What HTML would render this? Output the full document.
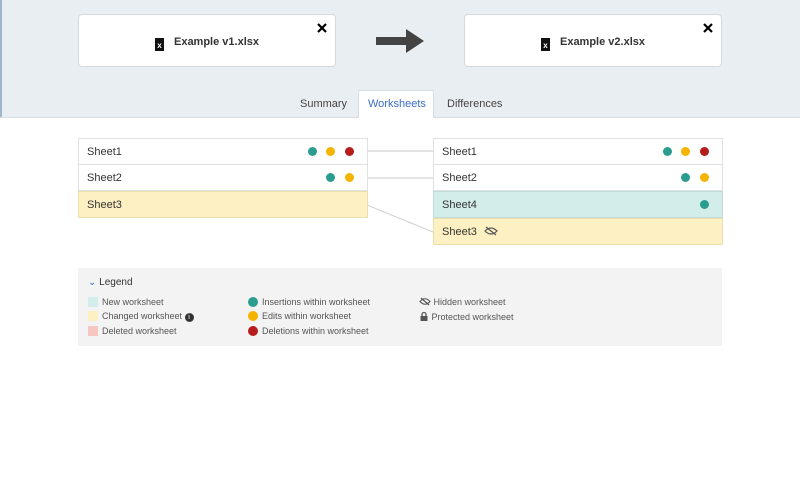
<!DOCTYPE html><html><head><style>
body{margin:0;width:800px;height:500px;background:#fff;font-family:"Liberation Sans",sans-serif;position:relative;overflow:hidden;color:#333}
.hdr{position:absolute;left:0;top:0;width:800px;height:117px;background:#e9eef3;border-bottom:1px solid #d6dde4}
.card{position:absolute;top:14px;width:258px;height:53px;background:#fff;border:1px solid #d4d9de;border-radius:4px;box-sizing:border-box;font-weight:bold;font-size:11px;color:#333}
.card .t{position:absolute;top:21px;left:0;width:100%;text-align:center}
.card svg.x{position:absolute;right:8px;top:8px}
.fi{display:inline-block;width:9px;height:13px;background:#111;vertical-align:-3px;margin-right:10px;position:relative;color:#fff;font-size:8px;line-height:16px;text-align:center}
.tab{position:absolute;top:98px;font-size:11px;color:#444}
.row{position:absolute;height:27px;box-sizing:border-box;border:1px solid #dfe2e5;font-size:11px;line-height:26px;padding-left:8px;color:#333}
.d{position:absolute;top:8px;width:9px;height:9px;border-radius:50%}
.g{background:#2a9d8f}.y{background:#f4b400}.r{background:#b71c1c}
.lg{position:absolute;left:78px;top:268px;width:644px;height:78px;background:#f3f3f3;font-size:9px;color:#555}
.lg div{position:absolute}
.sw{width:10px;height:10px}
</style></head><body>
<div class="hdr"></div>
<div style="position:absolute;left:0;top:0;width:2px;height:117px;background:#9fb4c8"></div>
<div class="card" style="left:78px"><div class="t"><span class="fi">x</span>Example v1.xlsx</div><svg class="x" width="10" height="10"><path d="M1 1L9 9M9 1L1 9" stroke="#000" stroke-width="2.2"/></svg></div>
<div class="card" style="left:464px"><div class="t"><span class="fi">x</span>Example v2.xlsx</div><svg class="x" width="10" height="10"><path d="M1 1L9 9M9 1L1 9" stroke="#000" stroke-width="2.2"/></svg></div>
<svg style="position:absolute;left:376px;top:28px" width="50" height="26"><rect x="0" y="9" width="34" height="8" fill="#444"/><path d="M30 1 L48 13 L30 25Z" fill="#444"/></svg>
<div class="tab" style="left:300px">Summary</div>
<div style="position:absolute;left:358px;top:90px;width:76px;height:28px;background:#fff;border:1px solid #d6dde4;border-bottom:none;box-sizing:border-box"></div>
<div class="tab" style="left:368px;color:#3a6ec8">Worksheets</div>
<div class="tab" style="left:447px">Differences</div>
<svg style="position:absolute;left:0;top:0" width="800" height="300"><g stroke="#d4d4d4" stroke-width="1.2"><line x1="367" y1="151" x2="433" y2="151"/><line x1="367" y1="178" x2="433" y2="178"/><line x1="367" y1="205" x2="433" y2="232"/></g></svg>
<div class="row" style="left:78px;top:138px;width:290px">Sheet1<span class="d g" style="left:229px"></span><span class="d y" style="left:247px"></span><span class="d r" style="left:266px"></span></div>
<div class="row" style="left:78px;top:164px;width:290px">Sheet2<span class="d g" style="left:247px"></span><span class="d y" style="left:266px"></span></div>
<div class="row" style="left:78px;top:191px;width:290px;background:#fdf0c2;border-color:#ecdfae">Sheet3</div>
<div class="row" style="left:433px;top:138px;width:290px">Sheet1<span class="d g" style="left:229px"></span><span class="d y" style="left:247px"></span><span class="d r" style="left:266px"></span></div>
<div class="row" style="left:433px;top:164px;width:290px">Sheet2<span class="d g" style="left:247px"></span><span class="d y" style="left:266px"></span></div>
<div class="row" style="left:433px;top:191px;width:290px;background:#d3eeea;border-color:#c0dcd8">Sheet4<span class="d g" style="left:266px"></span></div>
<div class="row" style="left:433px;top:218px;width:290px;background:#fdf0c2;border-color:#ecdfae">Sheet3 <svg width="14" height="10" style="margin-left:4px;vertical-align:-1px"><path d="M1 5Q7 -1 13 5Q7 11 1 5Z" fill="none" stroke="#555" stroke-width="1.2"/><path d="M2 1L12 9" stroke="#555" stroke-width="1.3"/></svg></div>
<div class="lg">
<div style="left:10px;top:9px;font-size:10px;color:#333"><span style="color:#3a6ec8">⌄</span> Legend</div>
<div class="sw" style="left:10px;top:29px;background:#d3eeea"></div><div style="left:24px;top:29px">New worksheet</div>
<div class="sw" style="left:10px;top:43px;background:#fdf0c2"></div><div style="left:24px;top:43px">Changed worksheet <span style="display:inline-block;width:9px;height:9px;border-radius:50%;background:#333;color:#fff;font-size:7px;text-align:center;line-height:9px">i</span></div>
<div class="sw" style="left:10px;top:58px;background:#f6c6c0"></div><div style="left:24px;top:58px">Deleted worksheet</div>
<div class="sw g" style="left:170px;top:29px;border-radius:50%"></div><div style="left:184px;top:29px">Insertions within worksheet</div>
<div class="sw y" style="left:170px;top:43px;border-radius:50%"></div><div style="left:184px;top:43px">Edits within worksheet</div>
<div class="sw r" style="left:170px;top:58px;border-radius:50%"></div><div style="left:184px;top:58px">Deletions within worksheet</div>
<div style="left:341px;top:29px"><svg width="12" height="9" style="vertical-align:-1px"><path d="M1 4.5Q6 -1 11 4.5Q6 10 1 4.5Z" fill="none" stroke="#555" stroke-width="1.1"/><path d="M2 1L10 8" stroke="#555" stroke-width="1.2"/></svg> Hidden worksheet</div>
<div style="left:341px;top:43px"><svg width="10" height="10" style="vertical-align:-1px"><path d="M3 5V3.5a2 2 0 0 1 4 0V5" fill="none" stroke="#555" stroke-width="1.3"/><rect x="1.5" y="5" width="7" height="5" fill="#555"/></svg> Protected worksheet</div>
</div>
</body></html>
